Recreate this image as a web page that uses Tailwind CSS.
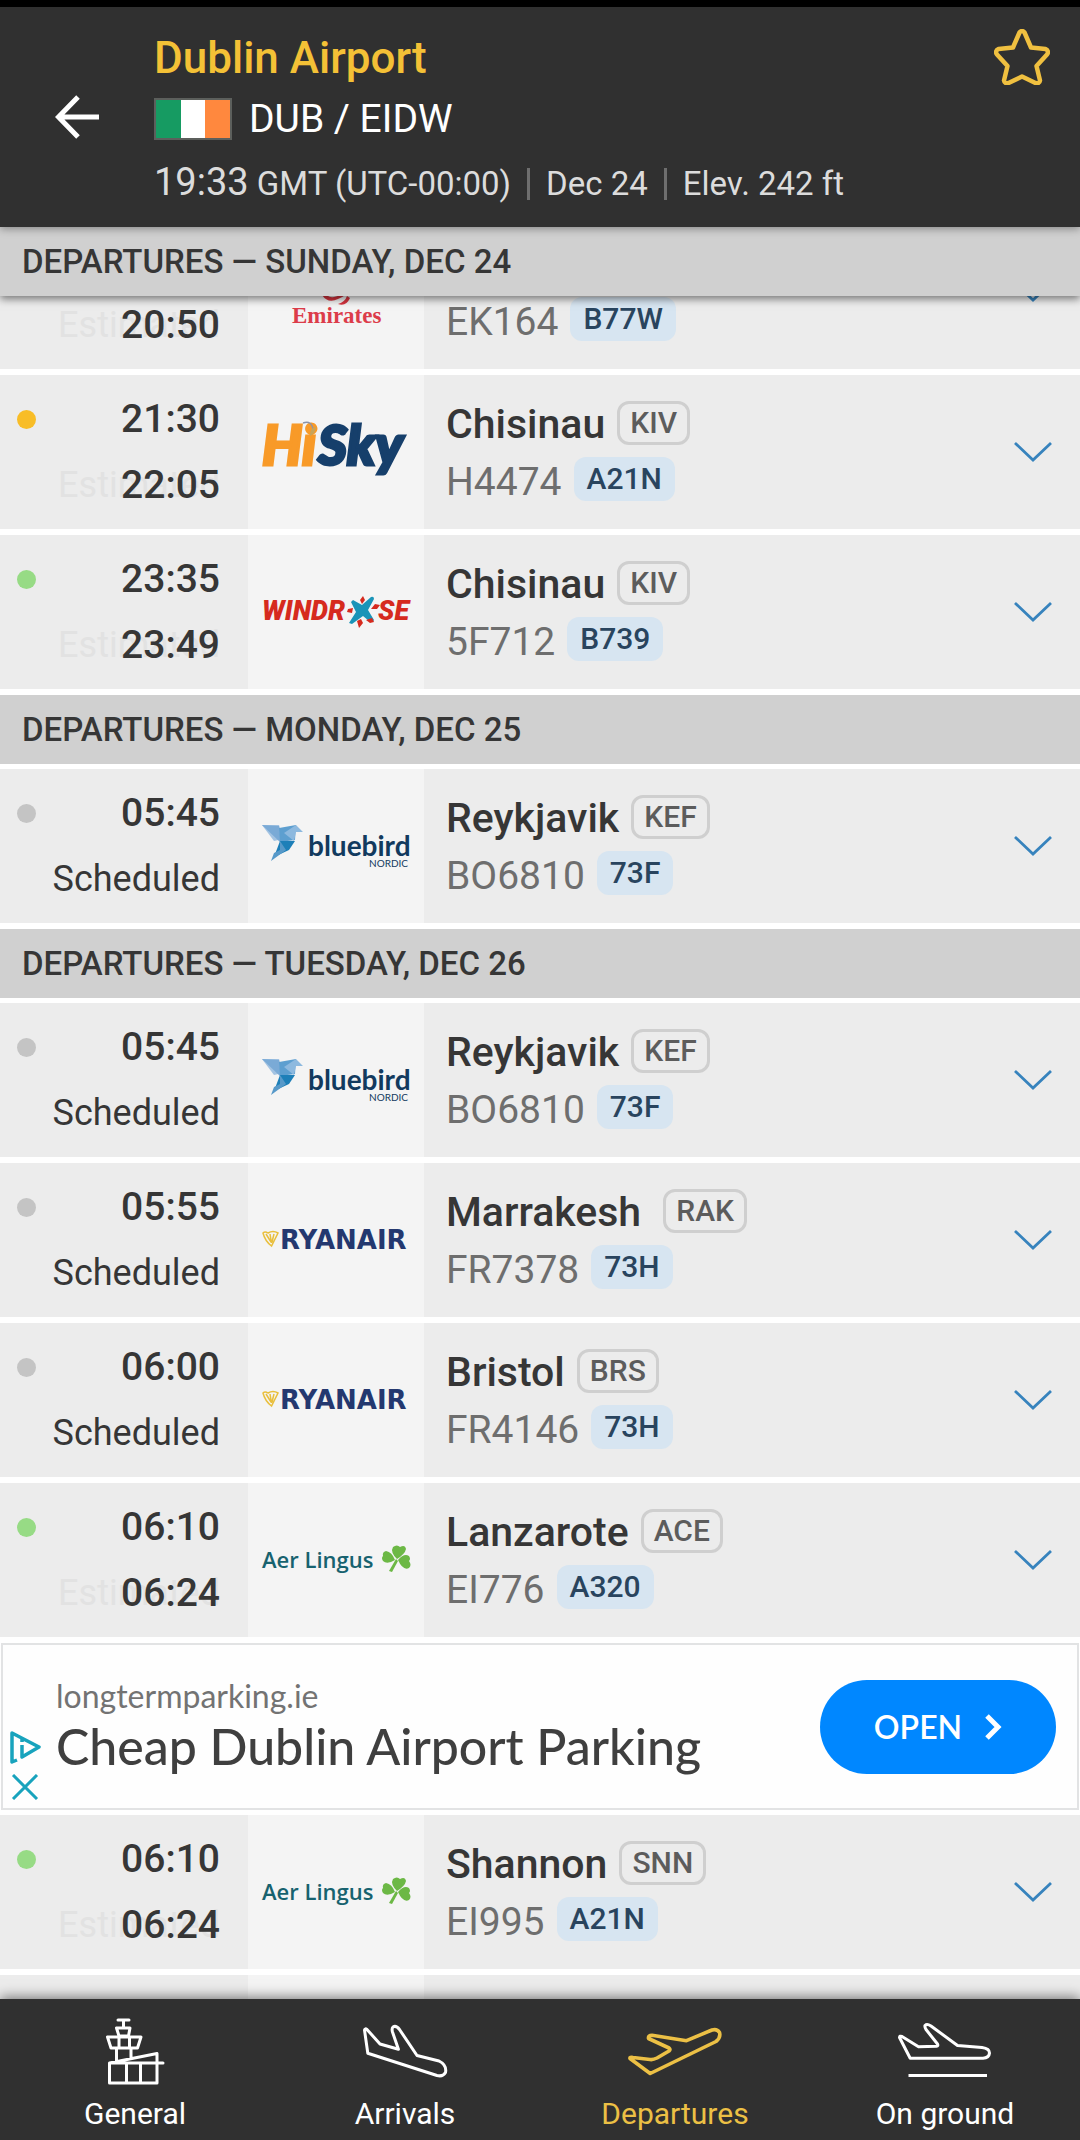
<!DOCTYPE html>
<html lang="en">
<head>
  <meta charset="UTF-8">
  <meta name="viewport" content="width=device-width, initial-scale=1.0">
  <title>Dublin Airport - Departures</title>
  <script src="https://cdn.jsdelivr.net/npm/@tailwindcss/browser@4"></script>
</head>
<body class="h-screen flex flex-col overflow-hidden bg-white font-['Roboto',sans-serif] text-[#363636]">

  <!-- Header -->
  <header class="relative z-20 flex items-start border-t-[7px] border-black bg-[#303030] pt-[22px] pb-[10px] pr-[30px] shadow-[0_2px_8px_rgba(0,0,0,0.35)]">
    <button aria-label="Back" class="w-[154px] pl-[54px] pt-16">
      <svg width="48" height="48" viewBox="0 0 48 48" fill="none" stroke="#fff" stroke-width="5"><path d="M45 24H6M24 4 4.500 24 24 44"/></svg>
    </button>
    <div class="flex-1">
      <h1 class="text-[44px] leading-[58px] font-medium text-[#f4c136]">Dublin Airport</h1>
      <div class="flex items-center text-[39px] leading-[64px] text-white">
        <svg class="mr-[17px]" width="78" height="42" viewBox="0 0 78 42" role="img" aria-label="Ireland">
          <rect width="78" height="42" fill="#5c5f5c"/>
          <rect x="2" y="2" width="25" height="38" fill="#169b62"/>
          <rect x="27" y="2" width="24" height="38" fill="#fff"/>
          <rect x="51" y="2" width="25" height="38" fill="#ff883e"/>
        </svg>
        <span>DUB / EIDW</span>
      </div>
      <div class="flex items-center text-[33px] leading-[66px] text-[#dcdcdc]">
        <div><span class="text-[38px] leading-none">19:33</span> GMT (UTC-00:00)</div>
        <span class="mx-4 h-8 w-[3px] bg-[#6e6e6e]"></span>
        <div>Dec 24</div>
        <span class="mx-4 h-8 w-[3px] bg-[#6e6e6e]"></span>
        <div>Elev. 242 ft</div>
      </div>
    </div>
    <button aria-label="Add to favourites">
      <svg width="56" height="56" viewBox="0 0 56 56" fill="none" stroke="#f0c040" stroke-width="4.500" stroke-linejoin="round">
        <path d="M25.500 3.500Q28 .5 30.500 3.500L37 18.500 51.500 20Q55.500 22 53 25.500L42.500 37 46 51.500Q45.500 55 41.500 54L28 47.500 14.500 54Q10.500 55 10 51.500L13.500 37 3 25.500Q.5 22 4.500 20L19 18.500Z"/>
      </svg>
    </button>
  </header>

  <!-- Departure board -->
  <main id="board" class="flex-1 min-h-0 overflow-hidden"></main>

  <!-- Bottom navigation -->
  <nav class="relative z-20 flex bg-[#303030] pt-4 pb-[6px] text-[30px] leading-10 text-white shadow-[0_-2px_12px_rgba(0,0,0,0.5)]">
    <button class="flex-1 flex flex-col items-center gap-[9px]">
      <svg width="100" height="70" viewBox="0 0 100 70" fill="none" stroke="currentColor" stroke-width="3" stroke-linejoin="round" stroke-linecap="round">
        <path d="M33 5H44M38.500 5V12M31.500 13H45L43.500 21H34ZM22.500 22H56L52.500 33H26ZM34 22V33M44.500 22V33M31.500 33V46M46 33V43M24.500 48 72 38.500V68H24.500ZM24.500 48H78M41.500 48V68M55.500 48V68"/>
      </svg>
      <span>General</span>
    </button>
    <button class="flex-1 flex flex-col items-center gap-[9px]">
      <svg width="100" height="70" viewBox="0 0 100 70" fill="none" stroke="currentColor" stroke-width="3" stroke-linejoin="round">
        <path d="M9.500 15 12.800 38.300 82 60.500Q88 62 90.500 57.500 92 50 84 46L62 40.500 44.500 14.500Q41 10 38 12 36.500 13.500 37.500 17L43.400 34.300 25 29 12 14.500Q10 13 9.500 15Z"/>
      </svg>
      <span>Arrivals</span>
    </button>
    <button class="flex-1 flex flex-col items-center gap-[9px] text-[#ecc045]">
      <svg width="100" height="70" viewBox="0 0 100 70" fill="none" stroke="currentColor" stroke-width="3.600" stroke-linejoin="round">
        <path d="M5 43.500 25.200 58.500 91 26.500Q96 22.500 94.500 17.500 92 13.500 87 15L61.500 25.700 27 20.300Q23 20.300 23.500 23.500L44 33Q46 34.500 44 36L32 43Q28 45 25 44.500L8 42.500Q4.500 42 5 43.500Z"/>
      </svg>
      <span>Departures</span>
    </button>
    <button class="flex-1 flex flex-col items-center gap-[9px]">
      <svg width="100" height="70" viewBox="0 0 100 70" fill="none" stroke="currentColor" stroke-width="3" stroke-linejoin="round">
        <path d="M4.500 22.500 15.200 43.300H88Q94 43 94.500 38 94.500 33.500 87 32.500L62.500 30.500 36 11Q32 8.500 30 10.500 29.500 12 31 14.500L42.500 29Q43.500 31 41.500 31.300L23.500 31.700 7 21.500Q4.500 20.500 4.500 22.500ZM13.500 60.500H92"/>
      </svg>
      <span>On ground</span>
    </button>
  </nav>

  <script>
    // Airline logos, all on the same 148x100 canvas
    const logos = {
      emirates: `
        <path d="M60 53Q66 62 76 57 86 53 87 47L84 46Q80 54 72 55 65 56 63 50ZM76 62Q84 65 88 56L85 54Q83 60 76 62Z" fill="#d8343f"/>
        <text x="30" y="81" font-family="Liberation Serif" font-weight="700" font-size="23" fill="#dc3c4a">Emirates</text>`,
      hisky: `
        <g font-family="Lato" font-weight="900" font-style="italic" font-size="56" stroke-width="3">
          <text x="0" y="63" fill="#f89a28" stroke="#f89a28">Hi</text>
          <text x="56" y="63" fill="#163f6b" stroke="#163f6b">Sky</text>
        </g>
        <path d="M41 21Q50 18 51 28" fill="none" stroke="#8b93a8" stroke-width="1.500"/>
        <path d="M48 32Q48 26 54 25 53 32 48 34Z" fill="#c8a45a"/>`,
      windrose: `
        <g font-family="Roboto" font-weight="900" font-style="italic" font-size="27" fill="#d62a1e">
          <text x="0" y="58">WINDR</text>
          <text x="116" y="58">SE</text>
        </g>
        <path d="M91 38 100 43 109 35Q112 34 112 37L106 48 112 58Q111 61 107 59L101 54 90 62 87 61 94 50 89 40Z" fill="#1a94b8"/>
        <path d="M98 38 101 34 103 38 100 42ZM109 47 113 42 118 43 115 47ZM104 58 110 56 112 60 108 61ZM95 59 99 57 101 61 97 66ZM86 47 91 46 90 51 85 50Z" fill="#d62a1e"/>`,
      bluebird: `
        <path d="M0 29H17L21 43 12 45Z" fill="#a3c3e2"/>
        <path d="M0 29 17 30 19 47Z" fill="#7aaad6"/>
        <path d="M17 32 34 29 33 44 18 46Z" fill="#5d9fd0"/>
        <path d="M22 37 34 29 41 36H34L32 45Z" fill="#8db9df"/>
        <path d="M18 45H33L27 54 12 61Z" fill="#1d7fb8"/>
        <path d="M18 45 24 54 9 65 12 57 18 54Z" fill="#5799c9"/>
        <text x="46" y="60" font-family="Lato" font-weight="700" font-size="28" fill="#123a5e">bluebird</text>
        <text x="107" y="71" font-family="Lato" font-size="10" fill="#123a5e">NORDIC</text>`,
      ryanair: `
        <path d="M1 43Q3 41 6 43 11 40 16 43L9.500 56Q3 51 1 43ZM4 44 9 52M8 44 9.500 53M12 44 10 52" fill="none" stroke="#e9bf3c" stroke-width="1.500"/>
        <text x="18" y="59" font-family="DejaVu Sans" font-weight="700" font-size="26" fill="#24386f">RYANAIR</text>`,
      aerlingus: `
        <text x="0" y="58" font-family="Open Sans" font-weight="600" font-size="22" fill="#17626f">Aer Lingus</text>
        <g fill="#6cb845">
          <path d="M135 49Q128 42 131 37 135 34 138 37 143 34 144 39 143 44 135 49Z"/>
          <path d="M133 50Q125 55 121 51 119 48 121 46 120 42 124 41 130 42 133 50Z"/>
          <path d="M136 50Q142 43 147 46 149 49 147 51 150 55 147 58 141 61 136 50Z"/>
          <path d="M134 49 136 51 130 62 127 61Z"/>
        </g>`
    };

    // Dot colours by status
    const dots = {
      delayed: "bg-[#f8bd27]",
      ontime: "bg-[#97db85]",
      scheduled: "bg-[#c4c4c4]"
    };

    const board = [
      { heading: "DEPARTURES — SUNDAY, DEC 24", pinned: true },
      { status: "delayed", time: "20:10", est: "20:50", logo: "emirates", airline: "Emirates", city: "Dubai", iata: "DXB", flight: "EK164", plane: "B77W", under: true },
      { status: "delayed", time: "21:30", est: "22:05", logo: "hisky", airline: "HiSky", city: "Chisinau", iata: "KIV", flight: "H4474", plane: "A21N" },
      { status: "ontime", time: "23:35", est: "23:49", logo: "windrose", airline: "Windrose", city: "Chisinau", iata: "KIV", flight: "5F712", plane: "B739" },
      { heading: "DEPARTURES — MONDAY, DEC 25" },
      { status: "scheduled", time: "05:45", logo: "bluebird", airline: "Bluebird Nordic", city: "Reykjavik", iata: "KEF", flight: "BO6810", plane: "73F" },
      { heading: "DEPARTURES — TUESDAY, DEC 26" },
      { status: "scheduled", time: "05:45", logo: "bluebird", airline: "Bluebird Nordic", city: "Reykjavik", iata: "KEF", flight: "BO6810", plane: "73F" },
      { status: "scheduled", time: "05:55", logo: "ryanair", airline: "Ryanair", city: "Marrakesh ", iata: "RAK", flight: "FR7378", plane: "73H" },
      { status: "scheduled", time: "06:00", logo: "ryanair", airline: "Ryanair", city: "Bristol", iata: "BRS", flight: "FR4146", plane: "73H" },
      { status: "ontime", time: "06:10", est: "06:24", logo: "aerlingus", airline: "Aer Lingus", city: "Lanzarote", iata: "ACE", flight: "EI776", plane: "A320" },
      { ad: true },
      { status: "ontime", time: "06:10", est: "06:24", logo: "aerlingus", airline: "Aer Lingus", city: "Shannon", iata: "SNN", flight: "EI995", plane: "A21N" },
      { blank: true }
    ];

    function headingRow(item) {
      const pinned = item.pinned ? "relative z-10 shadow-[0_3px_8px_rgba(0,0,0,0.5)]" : "mb-[5px]";
      return `<h2 class="${pinned} bg-[#d0d0d0] px-[22px] text-[33px] leading-[69px] font-medium">${item.heading}</h2>`;
    }

    function flightRow(item) {
      // the first flight is scrolled partly under the pinned heading
      const under = item.under ? "-mt-[81px]" : "";
      const second = item.est
        ? `<div class="relative font-medium"><span class="absolute right-0 text-[36px] font-normal text-[#e2e2e2]">Estimated</span><span class="relative">${item.est}</span></div>`
        : `<div class="text-[36px]">Scheduled</div>`;
      return `
        <article class="${under} mb-1.5 h-[154px] grid grid-cols-[248px_176px_1fr_66px] bg-[#ececec]">
          <div class="flex justify-between pl-[17px] pr-7 pt-[11px] text-[39px] leading-[66px]">
            <span class="mt-6 size-[19px] rounded-full ${dots[item.status]}"></span>
            <div class="text-right">
              <div class="font-medium">${item.time}</div>
              ${second}
            </div>
          </div>
          <div class="flex items-center justify-center bg-[#f4f4f4]">
            <svg class="overflow-visible" width="148" height="100" viewBox="0 0 148 100" role="img" aria-label="${item.airline}">${logos[item.logo]}</svg>
          </div>
          <div class="pl-[22px] pt-5 leading-[58px]">
            <div class="flex items-start gap-3">
              <span class="text-[41px] font-medium whitespace-pre">${item.city}</span>
              <span class="mt-1.5 h-11 rounded-xl border-[3px] border-[#cfcfcf] px-[10px] text-[30px] leading-[38px] font-medium text-[#5c5c5c]">${item.iata}</span>
            </div>
            <div class="flex items-start gap-3">
              <span class="text-[39px] text-[#6e6e6e]">${item.flight}</span>
              <span class="mt-1 h-11 rounded-xl bg-[#d7e5f1] px-[13px] text-[30px] leading-11 font-medium text-[#29445e]">${item.plane}</span>
            </div>
          </div>
          <button aria-label="Show details" class="flex items-center">
            <svg width="38" height="22" viewBox="0 0 38 22" fill="none" stroke="#3783bd" stroke-width="2.800"><path d="M1 2 19 19 37 2"/></svg>
          </button>
        </article>`;
    }

    function adRow() {
      return `
        <aside class="mx-px mb-[5px] h-[167px] flex items-center border-2 border-[#e2e3e4] bg-[#fefefe] pr-[21px] font-['Lato',sans-serif]">
          <div class="w-[53px] pl-[6px] pt-[76px] flex flex-col gap-[10px]">
            <button aria-label="Ad choices">
              <svg width="32" height="34" viewBox="0 0 32 34" fill="none" stroke="#18a3bd" stroke-width="3.500" stroke-linejoin="round"><path d="M8 30 3 32V3L30 17 13 27V15M13 9V12"/></svg>
            </button>
            <button aria-label="Close ad">
              <svg width="32" height="26" viewBox="0 0 32 26" fill="none" stroke="#18a3bd" stroke-width="3"><path d="M4 1 28 25M28 1 4 25"/></svg>
            </button>
          </div>
          <div class="flex-1 pb-1">
            <div class="text-[32px] leading-[42px] text-[#737373]">longtermparking.ie</div>
            <div class="text-[50px] leading-[58px] font-medium text-[#3f3f3f]">Cheap Dublin Airport Parking</div>
          </div>
          <button class="h-[94px] w-[236px] flex items-center justify-center gap-[22px] rounded-full bg-[#0087ff] text-[32px] font-semibold text-white">
            OPEN
            <svg width="18" height="26" viewBox="0 0 18 26" fill="none" stroke="currentColor" stroke-width="5"><path d="M3 2 14 13 3 24"/></svg>
          </button>
        </aside>`;
    }

    function blankRow() {
      return `<div class="h-[154px] grid grid-cols-[248px_176px_1fr] bg-[#ececec]"><div></div><div class="bg-[#f4f4f4]"></div></div>`;
    }

    document.getElementById("board").innerHTML = board.map(item => {
      if (item.heading) return headingRow(item);
      if (item.ad) return adRow();
      if (item.blank) return blankRow();
      return flightRow(item);
    }).join("");
  </script>
</body>
</html>
